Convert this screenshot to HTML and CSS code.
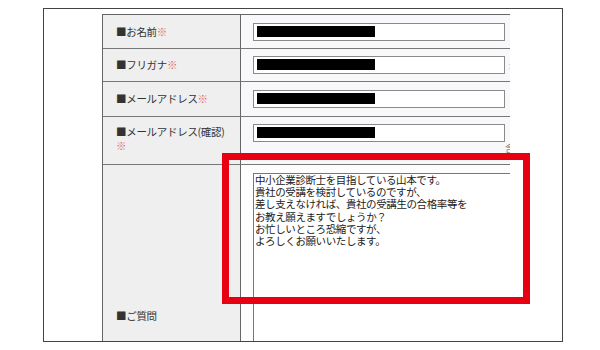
FILE: index.html
```html
<!DOCTYPE html>
<html lang="ja">
<head>
    <meta charset="UTF-8">
    <meta name="viewport" content="width=device-width, initial-scale=1.0">
    <title>お問い合わせフォーム</title>
    <link rel="stylesheet" href="styles.css">
</head>
<body>
    <div class="frame">
        <div class="clip">
            <div class="form">
                <div class="label row1">■お名前<span class="req">※</span></div>
                <div class="value row1">
                    <div class="field"><span class="mask"></span></div>
                </div>

                <div class="label row2">■フリガナ<span class="req">※</span></div>
                <div class="value row2">
                    <div class="field"><span class="mask"></span></div>
                    <span class="aside">:</span>
                </div>

                <div class="label row3">■メールアドレス<span class="req">※</span></div>
                <div class="value row3">
                    <div class="field"><span class="mask"></span></div>
                </div>

                <div class="label row4">■メールアドレス(確認)<br><span class="req">※</span></div>
                <div class="value row4 stacked">
                    <div class="field"><span class="mask"></span></div>
                    <div class="note">含(</div>
                </div>

                <div class="label row5 bottom">■ご質問</div>
                <div class="value row5">
                    <div class="textarea">中小企業診断士を目指している山本です。<br>貴社の受講を検討しているのですが、<br>差し支えなければ、貴社の受講生の合格率等を<br>お教え願えますでしょうか？<br>お忙しいところ恐縮ですが、<br>よろしくお願いいたします。</div>
                </div>
            </div>
        </div>
        <div class="highlight"></div>
    </div>
</body>
</html>
```

FILE: styles.css
```css
* {
    margin: 0;
    padding: 0;
    box-sizing: border-box;
}

body {
    font-family: 'Noto Sans CJK JP', sans-serif;
    background: #fff;
    color: #333;
}

.frame {
    position: relative;
    width: 520px;
    height: 334px;
    margin: 8px 0 0 43px;
    border: 1px solid #444;
    overflow: hidden;
    background: #fff;
}

.clip {
    width: 408px;
    margin: 5px 0 0 58px;
    overflow: hidden;
}

.form {
    display: grid;
    grid-template-columns: 138px 1fr;
    grid-template-rows: 34px 33px 35px 48px 310px;
    width: 470px;
    border-top: 1px solid #666;
    border-left: 1px solid #666;
}

.label {
    display: flex;
    align-items: center;
    padding-left: 13px;
    background: #efefef;
    border-right: 1px solid #666;
    border-bottom: 1px solid #777;
    font-size: 10.5px;
    line-height: 14px;
    letter-spacing: -0.3px;
    color: #333;
}

.label.row4 {
    display: block;
    padding-top: 8px;
}

.label.bottom {
    align-items: flex-start;
    padding-top: 144px;
}

.req {
    color: #e06262;
}

.value {
    display: flex;
    align-items: center;
    padding-left: 12px;
    background: #f8f8fb;
    border-bottom: 1px solid #777;
}

.value.stacked {
    flex-direction: column;
    align-items: flex-start;
    padding-top: 7px;
}

.value.row5 {
    align-items: flex-start;
    background: #fdfdfe;
}

.field {
    width: 252px;
    height: 18px;
    padding: 2px 3px;
    border: 1px solid #8a8a8a;
    background: #fff;
}

.mask {
    display: block;
    width: 118px;
    height: 11px;
    background: #000;
}

.aside {
    margin-left: 4px;
    font-size: 9px;
    color: #666;
}

.note {
    width: 252px;
    text-align: right;
    font-size: 9px;
    line-height: 10px;
    color: #666;
    margin-top: 2px;
    transform: translateX(12px);
}

.textarea {
    width: 260px;
    height: 300px;
    margin-top: 8px;
    padding: 0 1px;
    border: 1px solid #777;
    background: #fff;
    font-size: 10.5px;
    line-height: 12.2px;
    letter-spacing: -0.4px;
    color: #222;
    white-space: nowrap;
}

.highlight {
    position: absolute;
    left: 178px;
    top: 144px;
    width: 308px;
    height: 151px;
    border: 7px solid #e60012;
}
```
